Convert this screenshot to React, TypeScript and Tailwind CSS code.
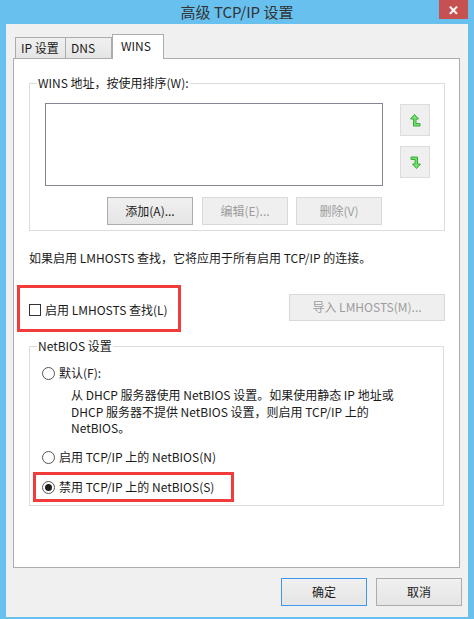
import React from "react";

const font = "font-['Microsoft_YaHei','Noto_Sans_CJK_SC',sans-serif]";

const Btn: React.FC<{ label: string; disabled?: boolean; primary?: boolean; className?: string }> = ({
    label,
    disabled,
    primary,
    className = "",
}) => (
    <div
        className={
            "w-[86px] h-[28px] flex items-center justify-center text-[12px] border " +
            (disabled
                ? "bg-[#efefef] border-[#d9d9d9] text-[#9d9d9d] "
                : primary
                ? "bg-gradient-to-b from-[#f0f0f0] to-[#e5e5e5] border-[#3c98f0] text-[#1a1a1a] "
                : "bg-gradient-to-b from-[#f0f0f0] to-[#e5e5e5] border-[#acacac] text-[#1a1a1a] ") +
            className
        }
    >
        {label}
    </div>
);

const UpArrow = () => (
    <svg width="11" height="13" viewBox="0 0 11 13">
        <path d="M4.5 0.5 L8.5 5 L6 5 L6 9.5 L10 9.5 L10 12 L3.5 12 L3.5 5 L0.5 5 Z" fill="#6ee36e" stroke="#3ea83e" strokeWidth="1" />
    </svg>
);

const DownArrow = () => (
    <svg width="11" height="13" viewBox="0 0 11 13">
        <path d="M1 1 L7.5 1 L7.5 8 L10.5 8 L6.5 12.5 L2.5 8 L5 8 L5 3.5 L1 3.5 Z" fill="#6ee36e" stroke="#3ea83e" strokeWidth="1" />
    </svg>
);

const Radio: React.FC<{ checked?: boolean }> = ({ checked }) => (
    <div className="w-[13px] h-[13px] rounded-full border border-[#555] bg-white flex items-center justify-center shrink-0">
        {checked && <div className="w-[7px] h-[7px] rounded-full bg-[#1e1e1e]" />}
    </div>
);

export default function App() {
    return (
        <div className={`w-[474px] h-[619px] bg-[#67c0ee] flex flex-col text-[#1a1a1a] ${font}`}>
            {/* title bar */}
            <div className="h-[24px] relative flex items-center justify-center">
                <span className="text-[15px] text-[#333] leading-none -mt-[2px]">高级 TCP/IP 设置</span>
                <div className="absolute right-[6px] top-0 w-[29px] h-[19px] bg-[#c75050] flex items-center justify-center text-white text-[13px] font-bold">
                    ✕
                </div>
            </div>

            {/* client */}
            <div className="mx-[6px] mb-[2px] flex-1 bg-[#f0f0f0] flex flex-col">
                {/* tabs */}
                <div className="mt-[10px] ml-[7px] mr-[8px] flex flex-col">
                    <div className="flex items-end h-[24px] pl-[2px] relative z-10">
                        <div className="h-[21px] px-[5px] flex items-center text-[12px] border border-b-0 border-[#acacac] bg-gradient-to-b from-[#f0f0f0] to-[#e5e5e5] w-[51px]">
                            IP 设置
                        </div>
                        <div className="h-[21px] px-[5px] flex items-center text-[12px] border border-b-0 border-l-0 border-[#acacac] bg-gradient-to-b from-[#f0f0f0] to-[#e5e5e5] w-[46px]">
                            DNS
                        </div>
                        <div className="h-[25px] -mb-[1px] pl-[8px] pt-[2px] text-[12px] border border-b-0 border-[#acacac] bg-white w-[52px]">
                            WINS
                        </div>
                    </div>

                    {/* tab panel */}
                    <div className="h-[510px] border border-[#acacac] bg-white flex flex-col text-[12px]">
                        {/* WINS group */}
                        <fieldset className="mt-[16px] mx-[15px] border border-[#dcdcdc]">
                            <legend className="ml-[7px] px-[1px] leading-[16px]">WINS 地址，按使用排序(W):</legend>
                            <div className="pl-[15px] pr-[14px] pb-[5px]">
                                <div className="mt-[12px] flex items-start">
                                    <div className="w-[338px] h-[83px] border border-[#828790] bg-white" />
                                    <div className="ml-[17px] mt-[1px] flex flex-col gap-[10px]">
                                        <div className="w-[30px] h-[32px] border border-[#dcdcdc] bg-[#efefef] flex items-center justify-center">
                                            <UpArrow />
                                        </div>
                                        <div className="w-[30px] h-[32px] border border-[#dcdcdc] bg-[#efefef] flex items-center justify-center">
                                            <DownArrow />
                                        </div>
                                    </div>
                                </div>
                                <div className="mt-[11px] flex gap-[9px] pl-[62px]">
                                    <Btn label="添加(A)..." />
                                    <Btn label="编辑(E)..." disabled />
                                    <Btn label="删除(V)" disabled className="-ml-[1px]" />
                                </div>
                            </div>
                        </fieldset>

                        <div className="mt-[19px] ml-[15px] leading-[16px]">
                            如果启用 LMHOSTS 查找，它将应用于所有启用 TCP/IP 的连接。
                        </div>

                        <div className="mt-[19px] flex items-center justify-between ml-[3px] mr-[14px]">
                            <div className="w-[164px] h-[47px] border-[3px] border-[#f23c3c] flex items-center pl-[9px] pt-[2px]">
                                <div className="w-[12px] h-[12px] border border-[#333] bg-white shrink-0" />
                                <span className="ml-[4px] leading-[16px]">启用 LMHOSTS 查找(L)</span>
                            </div>
                            <div className="w-[156px] h-[27px] -mt-[3px] border border-[#d9d9d9] bg-[#efefef] text-[#9d9d9d] flex items-center justify-center">
                                导入 LMHOSTS(M)...
                            </div>
                        </div>

                        {/* NetBIOS group */}
                        <fieldset className="mt-[6px] mx-[15px] border border-[#dcdcdc]">
                            <legend className="ml-[7px] px-[1px] leading-[16px]">NetBIOS 设置</legend>
                            <div className="pl-[3px] pb-[3px]">
                                <div className="mt-[11px] ml-[9px] flex items-center gap-[4px] leading-[16px]">
                                    <Radio />
                                    <span>默认(F):</span>
                                </div>
                                <div className="mt-[6px] ml-[38px] leading-[16.7px]">
                                    从 DHCP 服务器使用 NetBIOS 设置。如果使用静态 IP 地址或
                                    <br />
                                    DHCP 服务器不提供 NetBIOS 设置，则启用 TCP/IP 上的
                                    <br />
                                    NetBIOS。
                                </div>
                                <div className="mt-[12px] ml-[9px] flex items-center gap-[4px] leading-[16px]">
                                    <Radio />
                                    <span>启用 TCP/IP 上的 NetBIOS(N)</span>
                                </div>
                                <div className="mt-[7px] w-[201px] h-[30px] border-[3px] border-[#f23c3c] flex items-center pl-[6px] gap-[4px] leading-[16px]">
                                    <Radio checked />
                                    <span>禁用 TCP/IP 上的 NetBIOS(S)</span>
                                </div>
                            </div>
                        </fieldset>
                    </div>
                </div>

                {/* dialog buttons */}
                <div className="mt-[10px] mr-[6px] flex justify-end gap-[9px]">
                    <Btn label="确定" primary />
                    <Btn label="取消" />
                </div>
            </div>
        </div>
    );
}
